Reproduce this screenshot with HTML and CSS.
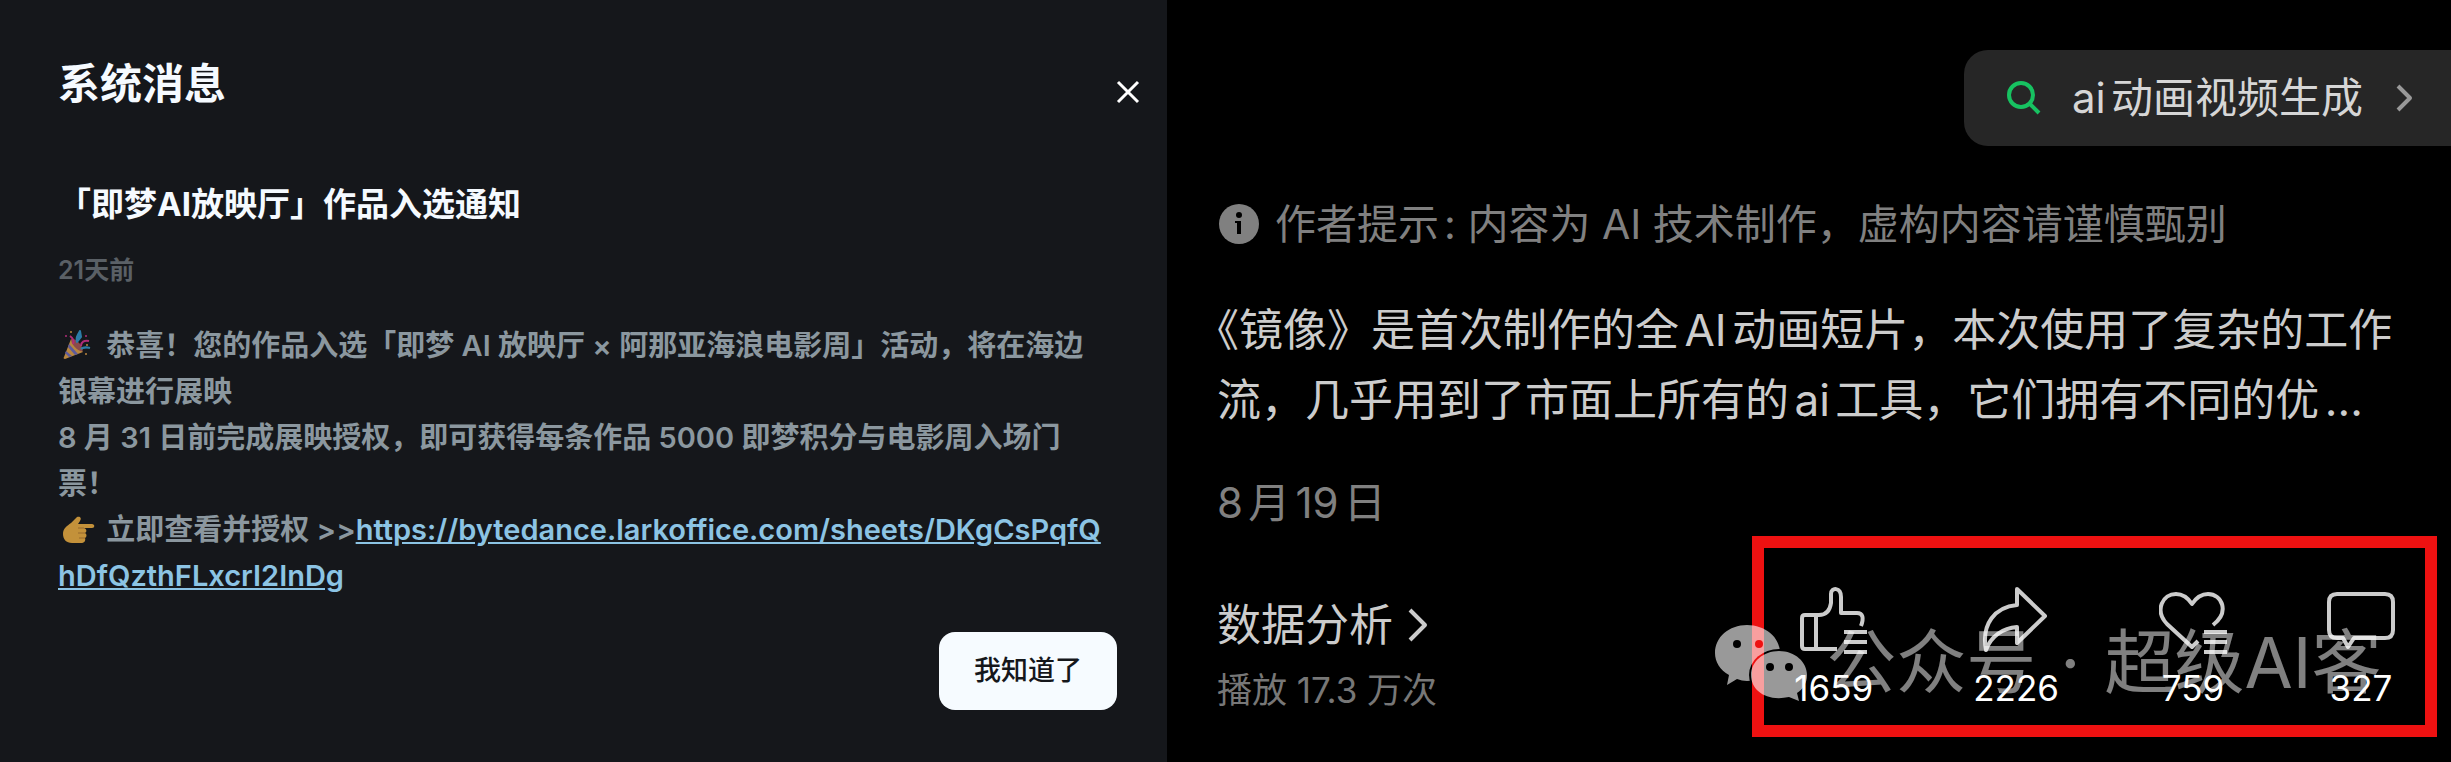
FILE: index.html
```
<!DOCTYPE html>
<html lang="zh-CN">
<head>
    <meta charset="UTF-8">
    <meta name="viewport" content="width=device-width, initial-scale=1.0">
    <title>系统消息</title>
    <link rel="stylesheet" href="styles.css">
</head>
<body>
    <section class="message">
        <header class="message-header">
            <h1>系统消息</h1>
            <button class="close-btn" aria-label="关闭">
                <svg width="26" height="26" viewBox="0 0 26 26"><path d="M3 3l20 20M23 3L3 23"/></svg>
            </button>
        </header>
        <h2>「即梦AI放映厅」作品入选通知</h2>
        <p class="time">21天前</p>
        <div class="message-body">
            <p>
                <svg class="emoji" width="32" height="30" viewBox="0 0 32 30">
                    <path d="M8 9L20 22 2 29c-1 0-2-1-1-2z" fill="#b8863f"/>
                    <path d="M6 14l9 10-3 1-7-8zM3 21l6 5-3 1-4-4z" fill="#5c5a9c"/>
                    <ellipse cx="14" cy="15" rx="3" ry="8" transform="rotate(-42 14 15)" fill="#8a4a4a"/>
                    <path d="M10 14c1-3 0-6-3-8M18 16c0-4 3-6 8-5" stroke="#b02c78" stroke-width="2" fill="none"/>
                    <path d="M14 12c-1-4 0-6 3-11l1 6zM18 19c3-3 6-2 9-1" stroke="#2c7ca8" stroke-width="2" fill="#2c7ca8"/>
                    <g fill="#b8863f"><circle cx="8" cy="2" r="1"/><circle cx="23" cy="24" r="1"/><circle cx="24" cy="15" r="1"/></g>
                    <g fill="#b02c78"><circle cx="3" cy="6" r="1"/><circle cx="23" cy="6" r="1"/></g>
                </svg>
                恭喜！您的作品入选「即梦 AI 放映厅 × 阿那亚海浪电影周」活动，将在海边银幕进行展映
            </p>
            <p>8 月 31 日前完成展映授权，即可获得每条作品 5000 即梦积分与电影周入场门票！</p>
            <p>
                <svg class="emoji" width="32" height="28" viewBox="0 0 32 28">
                    <path d="M14 1c3-1 5 1 3 4l-2 3h14c3 0 3 4 0 4h-8c3 1 3 4 1 5 2 1 2 4 0 5 1 3-1 5-4 5H9c-6 0-9-4-9-9 0-6 4-8 8-11z" fill="#c3913a"/>
                    <path d="M21 12h-6M22 17h-7M22 22h-6" stroke="#96682c" stroke-width="1" fill="none"/>
                </svg>
                立即查看并授权 &gt;&gt;<a href="https://bytedance.larkoffice.com/sheets/DKgCsPqfQhDfQzthFLxcrI2InDg">https://bytedance.larkoffice.com/sheets/DKgCsPqfQhDfQzthFLxcrI2InDg</a>
            </p>
        </div>
        <button class="confirm-btn">我知道了</button>
    </section>

    <section class="video">
        <a class="search" href="#">
            <svg width="36" height="36" viewBox="0 0 36 36"><circle cx="15" cy="15" r="12"/><path d="M23 23l10 10"/></svg>
            <span>ai动画视频生成</span>
            <svg class="search-arrow" width="18" height="28" viewBox="0 0 18 28"><path d="M3 2l12 12L3 26"/></svg>
        </a>
        <div class="notice">
            <svg width="40" height="40" viewBox="0 0 40 40">
                <circle cx="20" cy="20" r="20" fill="#808080"/>
                <circle cx="20" cy="11" r="3" fill="#000"/>
                <path d="M16 17h6v13h-4V19h-2z" fill="#000"/>
            </svg>
            <span>作者提示: 内容为 AI 技术制作，虚构内容请谨慎甄别</span>
        </div>
        <p class="desc">《镜像》是首次制作的全AI动画短片，本次使用了复杂的工作流，几乎用到了市面上所有的ai工具，它们拥有不同的优...</p>
        <p class="date">8月19日</p>
        <div class="bottom">
            <div class="stats">
                <a class="analysis" href="#">
                    数据分析
                    <svg width="22" height="36" viewBox="0 0 22 36"><path d="M3 3l15 15L3 33"/></svg>
                </a>
                <p class="plays">播放 17.3 万次</p>
            </div>
            <div class="actions">
                <button class="action">
                    <svg width="68" height="68" viewBox="0 0 68 68">
                        <path d="M37 63H5q-3 0-3-3V32q0-3 3-3h14c8 0 11-5 12-12V8c0-7 10-7 10 3v16h16c6 0 7 5 4 13M16 29v34"/>
                        <path d="M44 46h23M44 56h23M44 66h23"/>
                    </svg>
                    <span>1659</span>
                </button>
                <button class="action">
                    <svg width="68" height="68" viewBox="0 0 68 68">
                        <path d="M35 3l28 27-28 27V41C21 42 9 50 4 64-1 38 13 21 35 19z"/>
                    </svg>
                    <span>2226</span>
                </button>
                <button class="action">
                    <svg width="68" height="68" viewBox="0 0 68 68">
                        <path d="M39 55l-6 6L8 38C-5 24 4 8 17 8c7 0 12 4 16 10 4-6 9-10 16-10 14 0 22 18 5 31"/>
                        <path d="M45 46h23M45 56h23M45 66h23"/>
                    </svg>
                    <span>759</span>
                </button>
                <button class="action">
                    <svg width="68" height="68" viewBox="0 0 68 68">
                        <path d="M10 8h48q8 0 8 8v28q0 8-8 8H27l-6 9-5-9h-6q-8 0-8-8V16q0-8 8-8z"/>
                    </svg>
                    <span>327</span>
                </button>
                <div class="watermark">
                    <svg width="94" height="78" viewBox="0 0 94 78">
                        <mask id="bubble">
                            <rect width="94" height="78" fill="#fff"/>
                            <ellipse cx="65" cy="51" rx="30" ry="26" fill="#000"/>
                            <circle cx="23" cy="20" r="4" fill="#000"/>
                            <circle cx="45" cy="20" r="4" fill="#000"/>
                        </mask>
                        <mask id="eyes">
                            <rect width="94" height="78" fill="#fff"/>
                            <circle cx="56" cy="43" r="4" fill="#000"/>
                            <circle cx="75" cy="43" r="4" fill="#000"/>
                        </mask>
                        <path mask="url(#bubble)" d="M33 1c18 0 33 12 33 28S51 57 33 57q-5 0-10-2l-10 6 2-10C6 46 1 38 1 29 1 13 15 1 33 1z"/>
                        <path mask="url(#eyes)" d="M65 27c16 0 28 11 28 24 0 8-4 14-10 18l2 8-10-4c-23 5-38-7-38-22 0-13 12-24 28-24z"/>
                    </svg>
                    <span>公众号</span>
                    <span>·</span>
                    <span>超级AI客</span>
                </div>
            </div>
        </div>
    </section>
</body>
</html>
```
FILE: styles.css
```
* {
    box-sizing: border-box;
}

body {
    margin: 0;
    min-height: 100vh;
    display: grid;
    grid-template-columns: 1167fr 1284fr;
    background: #000;
    font-family: Inter, "Noto Sans CJK SC", sans-serif;
}

h1, h2, p {
    margin: 0;
}

button {
    padding: 0;
    border: none;
    background: none;
    font-family: inherit;
    cursor: pointer;
}

a {
    text-decoration: none;
}

svg {
    flex: none;
    fill: none;
    stroke-linejoin: round;
}

/* system message */
.message {
    min-width: 0;
    padding: 54px 50px 52px 58px;
    display: flex;
    flex-direction: column;
    background: #15171b;
}

.message-header {
    display: flex;
    justify-content: space-between;
    align-items: center;
    margin-right: -24px;
}

.message h1 {
    font-size: 42px;
    line-height: 60px;
    color: #f5faff;
}

.close-btn {
    height: 26px;
    margin-top: 16px;
}

.close-btn svg {
    display: block;
    stroke: #fff;
    stroke-width: 3;
}

.message h2 {
    margin-top: 66px;
    font-size: 33px;
    line-height: 48px;
    color: #f5faff;
}

.time {
    margin-top: 24px;
    font-size: 25px;
    font-weight: 600;
    line-height: 36px;
    color: #5a6066;
}

.message-body {
    margin-top: 35px;
    margin-right: 16px;
    font-size: 29px;
    font-weight: 600;
    line-height: 46px;
    color: #8b979f;
    word-break: break-all;
}

.emoji {
    margin: 0 4px 0 5px;
    vertical-align: -4px;
}

.message-body a {
    color: #8cc4e4;
    text-decoration: underline;
}

.confirm-btn {
    align-self: flex-end;
    margin-top: auto;
    padding: 18px 35px;
    border-radius: 16px;
    background: #f6fbff;
    color: #15171b;
    font-size: 27px;
    font-weight: 500;
    line-height: 42px;
}

/* video info */
.video {
    min-width: 0;
    padding: 50px 0 25px 50px;
    display: flex;
    flex-direction: column;
    color: #ccc;
    text-autospace: normal;
}

.search {
    align-self: flex-end;
    display: flex;
    align-items: center;
    padding: 18px 38px 18px 42px;
    border-radius: 24px 0 0 24px;
    background: #262626;
    color: #d6d6d6;
    font-size: 42px;
    line-height: 60px;
}

.search svg {
    margin-right: 30px;
    stroke: #17c261;
    stroke-width: 4;
}

.search .search-arrow {
    margin: 0 0 0 32px;
    stroke: #999;
}

.notice {
    display: flex;
    align-items: center;
    gap: 16px;
    margin-top: 48px;
    padding-left: 2px;
    font-size: 41px;
    line-height: 60px;
    color: #808080;
}

.desc {
    margin-top: 41px;
    padding-right: 48px;
    font-size: 44px;
    line-height: 70px;
    text-spacing-trim: trim-start;
}

.date {
    margin-top: 36px;
    font-size: 42px;
    line-height: 64px;
    color: #808080;
}

.bottom {
    display: flex;
    justify-content: space-between;
    align-items: flex-end;
    margin-top: auto;
    padding-right: 14px;
}

.stats {
    padding-bottom: 22px;
}

.analysis {
    display: flex;
    align-items: center;
    gap: 14px;
    color: #ccc;
    font-size: 44px;
    line-height: 64px;
}

.analysis svg {
    stroke: #ccc;
    stroke-width: 4;
}

.plays {
    margin-top: 8px;
    font-size: 35px;
    line-height: 50px;
    color: #777;
}

.actions {
    position: relative;
    display: flex;
    gap: 100px;
    padding: 38px 30px 15px;
    border: 12px solid #e11;
}

.action {
    display: flex;
    flex-direction: column;
    align-items: center;
    gap: 12px;
    color: #fff;
    font-size: 35px;
    line-height: 44px;
}

.action svg {
    stroke: #ccc;
    stroke-width: 4;
}

.watermark {
    position: absolute;
    left: -50px;
    top: 65px;
    display: flex;
    align-items: center;
    gap: 24px;
    color: rgba(255, 255, 255, 0.5);
    font-size: 70px;
    line-height: 100px;
    white-space: nowrap;
    text-autospace: no-autospace;
    pointer-events: none;
}

.watermark svg {
    margin-right: -6px;
    fill: rgba(255, 255, 255, 0.6);
}
```
